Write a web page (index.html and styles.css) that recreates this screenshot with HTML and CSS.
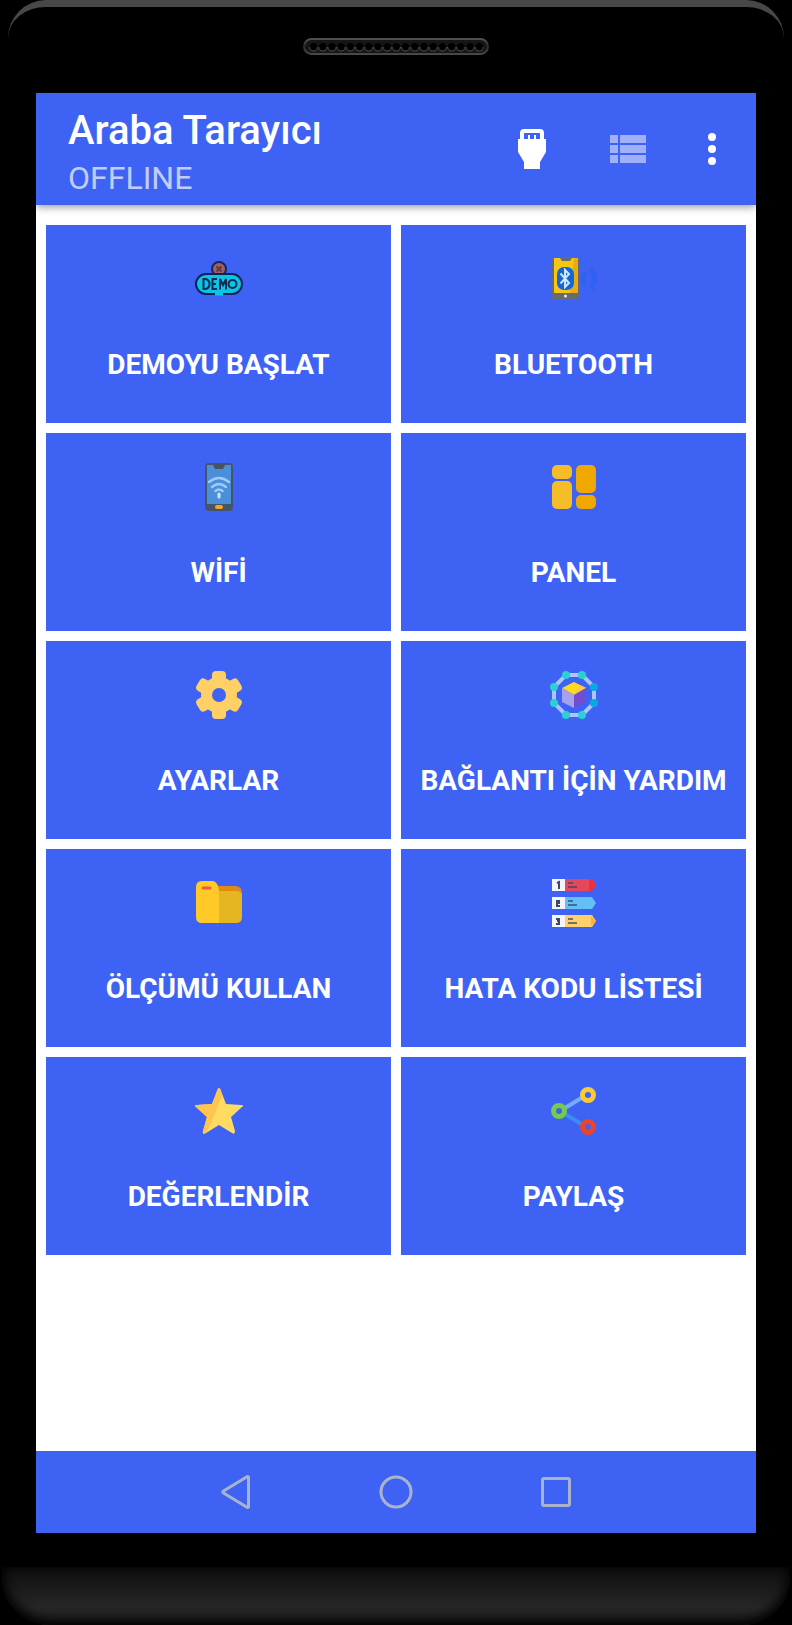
FILE: index.html
```html
<!DOCTYPE html>
<html lang="tr">
<head>
<meta charset="utf-8">
<meta name="viewport" content="width=device-width, initial-scale=1">
<title>Araba Tarayıcı</title>
<link rel="stylesheet" href="styles.css">
</head>
<body>
<div class="phone">
  <div class="bezel-top">
    <svg class="speaker" viewBox="0 0 186 18" aria-hidden="true">
      <defs>
        <linearGradient id="rim" x1="0" y1="0" x2="0" y2="1">
          <stop offset="0" stop-color="#505050"/><stop offset=".5" stop-color="#2c2c2c"/><stop offset="1" stop-color="#484848"/>
        </linearGradient>
        <pattern id="holes" x="6" y="0" width="9.2" height="18" patternUnits="userSpaceOnUse">
          <circle cx="4.6" cy="9" r="4" fill="#000"/>
          <path d="M.6 9a4 4 0 0 0 8 0" fill="none" stroke="#4c4c4c" stroke-width="1"/>
        </pattern>
      </defs>
      <rect x="1" y="1" width="184" height="15" rx="7.5" fill="#161616" stroke="url(#rim)" stroke-width="2"/>
      <rect x="6" y="0" width="174.8" height="18" fill="url(#holes)"/>
    </svg>
  </div>

  <div class="screen">
    <header class="app-bar">
      <div class="titles">
        <h1 class="title">Araba Tarayıcı</h1>
        <p class="subtitle">OFFLINE</p>
      </div>
      <div class="actions">
        <button class="action" type="button" aria-label="Bağlantı">
          <svg class="action-icon" viewBox="0 0 48 48"><path fill="#fff" fill-rule="evenodd" d="M12 14V8q0-4 4-4h16q4 0 4 4v6h2v13l-6 10v7H16v-7l-6-10V14zM16 8v6h4v-4h2v4h4v-4h2v4h4V8z"/></svg>
        </button>
        <button class="action" type="button" aria-label="Liste">
          <svg class="action-icon" viewBox="0 0 48 48"><path fill="#a0b1fa" d="M6 10h8v8H6zm10 0h26v8H16zM6 20h8v8H6zm10 0h26v8H16zM6 30h8v8H6zm10 0h26v8H16z"/></svg>
        </button>
        <button class="action action-menu" type="button" aria-label="Menü">
          <svg class="action-icon" viewBox="0 0 48 48"><g fill="#fff"><circle cx="24" cy="12" r="4"/><circle cx="24" cy="24" r="4"/><circle cx="24" cy="36" r="4"/></g></svg>
        </button>
      </div>
    </header>

    <main class="grid">
      <button class="tile" type="button">
        <svg class="tile-icon" viewBox="0 0 48 48" aria-hidden="true">
          <circle cx="24" cy="14" r="7" fill="#a0605f" stroke="#1c2452" stroke-width="2"/>
          <path d="M21.500 11.500l5 5m0-5l-5 5" stroke="#5d3a4c" stroke-width="2"/>
          <rect x="1" y="19" width="46" height="20" rx="10" fill="#0cc5e4" stroke="#0b2358" stroke-width="2"/>
          <path d="M20 39h8" stroke="#0cc5e4" stroke-width="3"/>
          <g fill="none" stroke="#0b2b55" stroke-width="2"><path d="M8.500 24v10h2q4-1 4-5t-4-5zM22 24h-4.500v10H22m-4.500-5H21M25 34.500V24l3 6 3-6v10.500"/><circle cx="37.500" cy="29" r="4"/></g>
        </svg>
        <span class="tile-label">DEMOYU BAŞLAT</span>
      </button>
      <button class="tile" type="button">
        <svg class="tile-icon" viewBox="0 0 48 48" aria-hidden="true">
          <rect x="2" y="2" width="27" height="43" rx="3" fill="#666b72"/>
          <path d="M4 3h6l2 3h8l2-3h6v35H4z" fill="#f5c614"/>
          <path d="M24 3h4v35h-8z" fill="#e9aa16"/>
          <rect x="7" y="12" width="17" height="23" rx="7" fill="#1266d8"/>
          <path d="M10.500 18.500L19 28l-4 4V15l4 4-8.500 9.500" fill="none" stroke="#cfe6ff" stroke-width="2"/>
          <circle cx="15.500" cy="41" r="1.500" fill="#e8e8e8"/>
          <path d="M36 18q-6 6 0 12M41 14q7 10 0 20" fill="none" stroke="#2f62f2" stroke-width="5"/>
        </svg>
        <span class="tile-label">BLUETOOTH</span>
      </button>
      <button class="tile" type="button">
        <svg class="tile-icon" viewBox="0 0 48 48" aria-hidden="true">
          <rect x="10" y="0" width="28" height="48" rx="4" fill="#475466"/>
          <path d="M12 2h6l2 4h8l2-4h6v39H12z" fill="#4a8fd8"/>
          <g fill="none" stroke="#9cccf8" stroke-width="2.500" stroke-linecap="round"><path d="M14 19q10-8 20 0M17 24q7-6 14 0M20.500 28q3.500-3 7 0"/><path d="M24 31v3" stroke="#c8e6ff" stroke-width="3"/></g>
          <rect x="20" y="42" width="8" height="4" rx="2" fill="#f5a623"/>
        </svg>
        <span class="tile-label">WİFİ</span>
      </button>
      <button class="tile" type="button">
        <svg class="tile-icon" viewBox="0 0 48 48" aria-hidden="true">
          <rect x="2" y="2" width="20" height="14" rx="5" fill="#f5bd28"/>
          <rect x="2" y="18" width="20" height="28" rx="5" fill="#f5bd28"/>
          <rect x="26" y="2" width="20" height="28" rx="5" fill="#f0a800"/>
          <rect x="26" y="32" width="20" height="14" rx="5" fill="#f0a800"/>
        </svg>
        <span class="tile-label">PANEL</span>
      </button>
      <button class="tile" type="button">
        <svg class="tile-icon" viewBox="0 0 48 48" aria-hidden="true">
          <g fill="#ffd066">
            <circle cx="24" cy="24" r="18"/>
            <rect x="17" y="0" width="14" height="48" rx="4"/>
            <rect x="17" y="0" width="14" height="48" rx="4" transform="rotate(60 24 24)"/>
            <rect x="17" y="0" width="14" height="48" rx="4" transform="rotate(120 24 24)"/>
          </g>
          <circle cx="24" cy="24" r="7" fill="#3e63f4"/>
        </svg>
        <span class="tile-label">AYARLAR</span>
      </button>
      <button class="tile" type="button">
        <svg class="tile-icon" viewBox="0 0 48 48" aria-hidden="true">
          <path d="M16 4h16l12 12v16L32 44H16L4 32V16z" fill="none" stroke="#a9c6ff" stroke-width="4"/>
          <g fill="#2cd0d0"><circle cx="16" cy="4" r="4"/><circle cx="32" cy="4" r="4"/><circle cx="4" cy="16" r="4"/><circle cx="4" cy="32" r="4"/><circle cx="16" cy="44" r="4"/><circle cx="32" cy="44" r="4"/></g>
          <g fill="#08a9df"><circle cx="44" cy="16" r="4"/><circle cx="44" cy="32" r="4"/></g>
          <path d="M24 11l12 6-12 7-12-7z" fill="#ffd91f"/><path d="M30 14l6 3-12 7z" fill="#fdc84d"/>
          <path d="M12 17l12 7v13l-12-6z" fill="#a6a1ed"/><path d="M36 17l-12 7v13l12-6z" fill="#704fcf"/>
        </svg>
        <span class="tile-label">BAĞLANTI İÇİN YARDIM</span>
      </button>
      <button class="tile" type="button">
        <svg class="tile-icon" viewBox="0 0 48 48" aria-hidden="true">
          <path d="M16 7h24q7 0 7 7v12H16z" fill="#e08a12"/>
          <path d="M20 12h21q6 0 6 5v21q0 6-6 6H20z" fill="#e6b522"/>
          <path d="M7 2h10q4 0 6 5l1 4v33H7q-6 0-6-6V8q0-6 6-6z" fill="#ffc928"/>
          <path d="M8 9h7" stroke="#ef5b36" stroke-width="3" stroke-linecap="round"/>
        </svg>
        <span class="tile-label">ÖLÇÜMÜ KULLAN</span>
      </button>
      <button class="tile" type="button">
        <svg class="tile-icon" viewBox="0 0 48 48" aria-hidden="true">
          <path d="M15 0h27l4 6-4 6H15z" fill="#e5485a"/><path d="M39 0h3l4 6-4 6h-3z" fill="#f02f3e"/>
          <path d="M15 18h27l4 6-4 6H15z" fill="#62c0f5"/><path d="M15 36h27l4 6-4 6H15z" fill="#ffd06a"/><path d="M41 37l5 5-5 5z" fill="#ffb329"/>
          <path d="M2 0h13v12H2zM2 18h13v12H2zM2 36h13v12H2z" fill="#f4f5fb"/>
          <path d="M7 4l2-1v7M6 22h3v2H7v3h3M6 40h3v2H7m2 0v3H6" fill="none" stroke="#3c4864" stroke-width="2"/>
          <path d="M18 4h5m-5 4h9M18 22h5m-5 4h9M18 40h5m-5 4h9" stroke="#394968" stroke-opacity=".7" stroke-width="2"/>
        </svg>
        <span class="tile-label">HATA KODU LİSTESİ</span>
      </button>
      <button class="tile" type="button">
        <svg class="tile-icon" viewBox="0 0 48 48" aria-hidden="true">
          <path d="M24 1q1 0 2 3l5 13 15 1q4 0 1 2L36 30l4 14q0 4-3 2l-13-8-13 8q-4 2-3-2l4-14L1 20q-3-2 1-2l15-1 5-13q1-3 2-3z" fill="#ffdb62"/>
          <path d="M24 1q-1 0-2 3l-5 13-15 1q-4 0-1 2l11 10-4 14q-1 4 3 2l5-10L27 8l-1-4q-1-3-2-3z" fill="#ffc54e"/>
        </svg>
        <span class="tile-label">DEĞERLENDİR</span>
      </button>
      <button class="tile" type="button">
        <svg class="tile-icon" viewBox="0 0 48 48" aria-hidden="true">
          <path d="M15 21l18-11" stroke="#74adff" stroke-width="4"/><path d="M15 27l18 11" stroke="#3c8df2" stroke-width="4"/>
          <circle cx="9" cy="24" r="5.500" fill="none" stroke="#76cc45" stroke-width="5"/>
          <circle cx="38" cy="8" r="5.500" fill="none" stroke="#fbca35" stroke-width="5"/>
          <circle cx="38" cy="40" r="5.500" fill="none" stroke="#ed432b" stroke-width="5"/>
        </svg>
        <span class="tile-label">PAYLAŞ</span>
      </button>
    </main>

    <nav class="nav-bar">
      <button class="nav-button" type="button" aria-label="Geri">
        <svg class="nav-icon" viewBox="0 0 40 40"><path d="M32.500 5.500v29q0 1.500-1.500.8L7.500 21q-1.500-1 0-2L31 4.700q1.500-.7 1.500.8z" fill="none" stroke="#a9b3cd" stroke-width="3" stroke-linejoin="round"/></svg>
      </button>
      <button class="nav-button" type="button" aria-label="Ana ekran">
        <svg class="nav-icon" viewBox="0 0 40 40"><circle cx="20" cy="20" r="15" fill="none" stroke="#a9b3cd" stroke-width="3"/></svg>
      </button>
      <button class="nav-button" type="button" aria-label="Son uygulamalar">
        <svg class="nav-icon" viewBox="0 0 40 40"><rect x="6.500" y="6.500" width="27" height="27" rx="1.500" fill="none" stroke="#a9b3cd" stroke-width="3"/></svg>
      </button>
    </nav>
  </div>
  <div class="bezel-bottom"></div>
</div>
</body>
</html>
```
FILE: styles.css
```css
* {
  box-sizing: border-box;
}

body {
  margin: 0;
  background: #000;
  font-family: Roboto, "Noto Sans", sans-serif;
}

button {
  border: 0;
  padding: 0;
  background: none;
  color: inherit;
  font: inherit;
  cursor: pointer;
}

.phone {
  display: flex;
  flex-direction: column;
  min-height: 100vh;
}

.bezel-top {
  display: flex;
  justify-content: center;
  height: 93px;
  margin: 0 8px;
  padding-top: 31px;
  border-top: 7px solid #484848;
  border-radius: 38px 38px 0 0;
}

.speaker {
  width: 186px;
  height: 18px;
}

.screen {
  display: flex;
  flex: 1;
  flex-direction: column;
  margin: 0 36px;
  background: #fff;
}

.app-bar {
  display: flex;
  align-items: center;
  justify-content: space-between;
  height: 112px;
  padding: 0 8px 0 32px;
  background: #3e63f4;
  box-shadow: 0 2px 8px rgba(0, 0, 0, 0.4);
  clip-path: inset(0 0 -12px 0);
  color: #fff;
}

.titles {
  padding-top: 10px;
}

.title {
  margin: 0;
  font-size: 40px;
  font-weight: 500;
  line-height: 48px;
}

.subtitle {
  margin: 0;
  font-size: 32px;
  line-height: 46px;
  color: #c1cdfb;
}

.actions {
  display: flex;
}

.action {
  display: grid;
  place-items: center;
  width: 96px;
  height: 96px;
}

.action-menu {
  width: 72px;
}

.action-icon {
  width: 48px;
  height: 48px;
}

.grid {
  display: grid;
  flex: 1;
  grid-template-columns: 1fr 1fr;
  align-content: start;
  gap: 10px;
  padding: 20px 10px;
}

.tile {
  display: flex;
  flex-direction: column;
  align-items: center;
  gap: 46px;
  height: 198px;
  padding-top: 30px;
  background: #3e63f4;
  color: #fff;
}

.tile-icon {
  width: 48px;
  height: 48px;
}

.tile-label {
  font-size: 28px;
  font-weight: 700;
  line-height: 32px;
}

.nav-bar {
  display: flex;
  justify-content: center;
  gap: 80px;
  height: 82px;
  background: #3e63f4;
}

.nav-button {
  display: grid;
  place-items: center;
  width: 80px;
}

.nav-icon {
  width: 40px;
  height: 40px;
}

.bezel-bottom {
  height: 58px;
  margin: 34px 2px 0;
  border-radius: 0 0 48px 48px;
  background: linear-gradient(#0e0e0e, #272727 70%);
  box-shadow: inset 0 -4px 12px 2px #000;
}
```
